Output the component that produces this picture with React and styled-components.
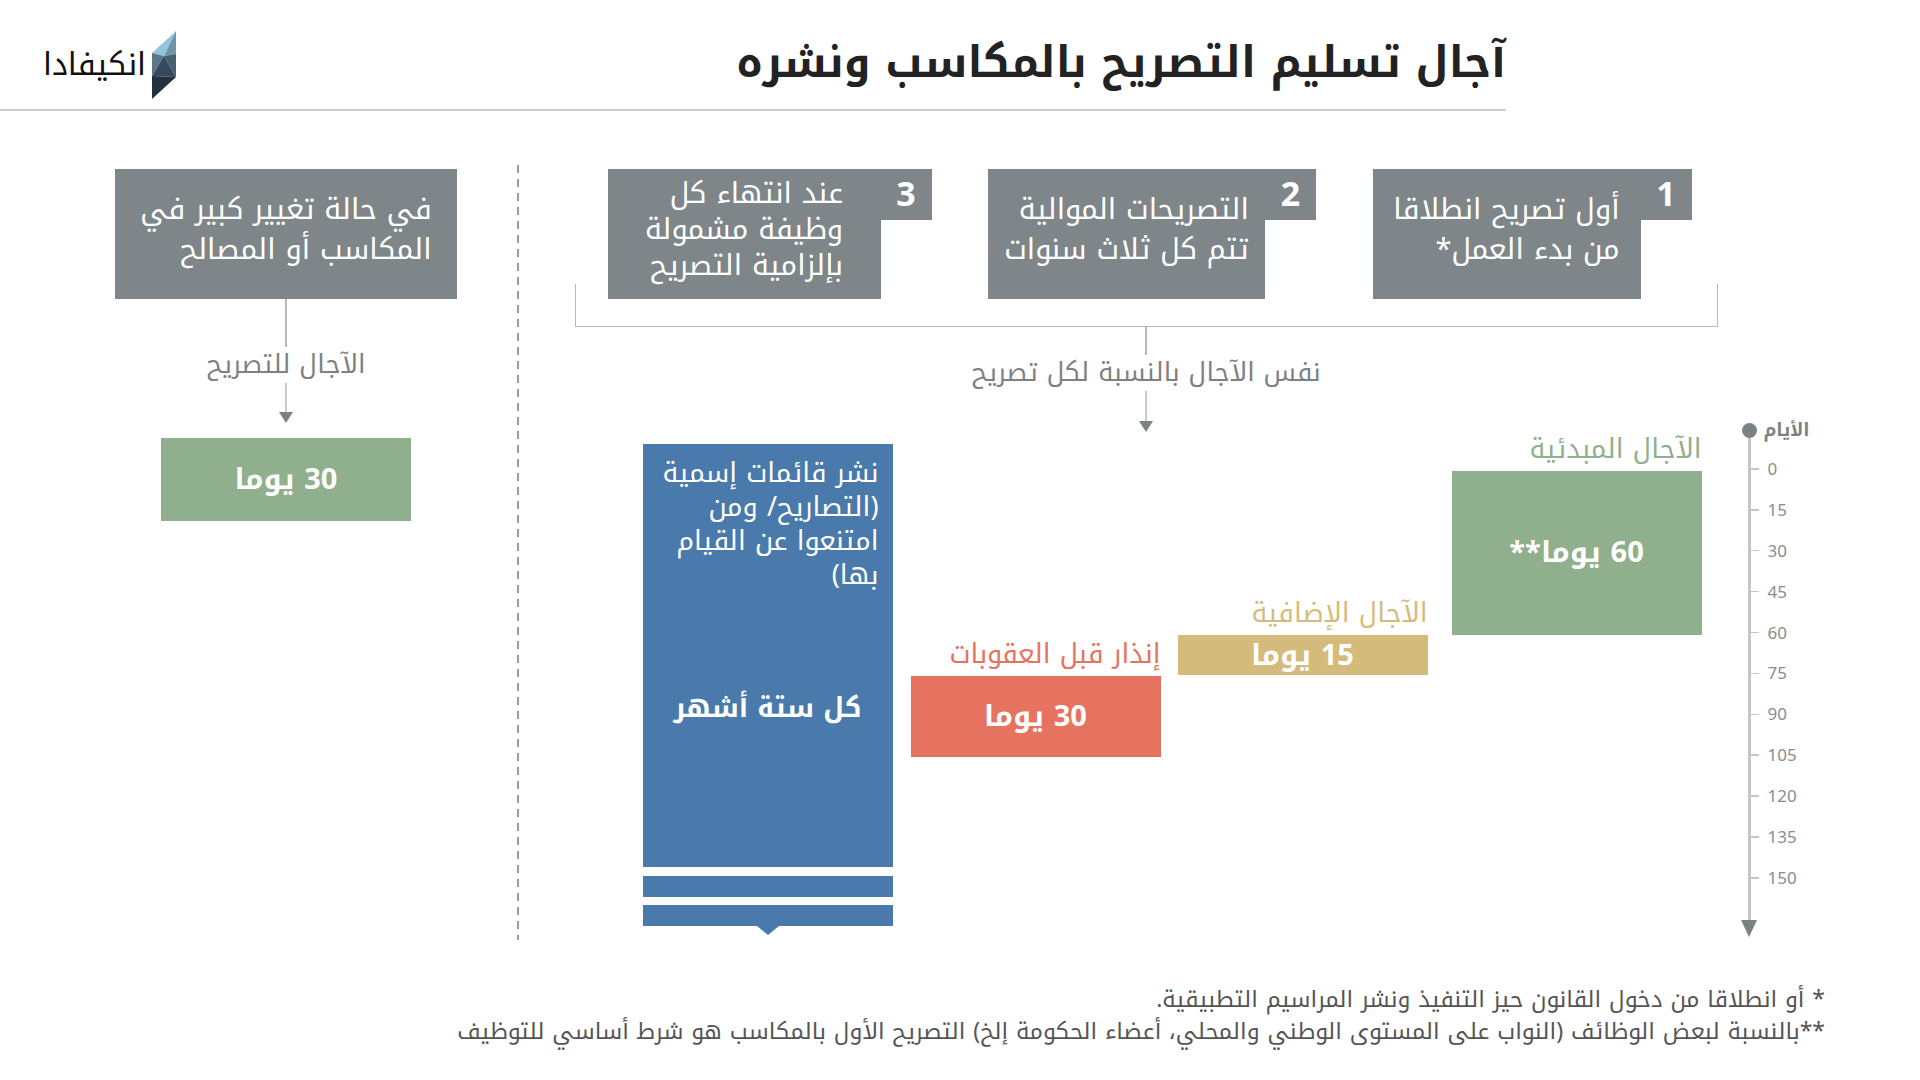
import React from 'react';
import styled, { createGlobalStyle } from 'styled-components';

const FONT = '"Noto Kufi Arabic", "Noto Sans Arabic", "DejaVu Sans", sans-serif';
const BOX_GRAY = '#7e8689';
const ARROW_GRAY = '#7b8285';
const LINE_GRAY = '#b9b9b9';

// chart scale: 15 days = 40.9px
const SCALE = 40.9 / 15;
const ZERO = 51;
const LABEL_H = 40;

const steps = [
  { num: 3, w: 273, lh: 36, lines: ['عند انتهاء كل', 'وظيفة مشمولة', 'بإلزامية التصريح'] },
  { num: 2, w: 277, lh: 40, lines: ['التصريحات الموالية', 'تتم كل ثلاث سنوات'] },
  { num: 1, w: 268, lh: 40, lines: ['أول تصريح انطلاقا', 'من بدء العمل*'] },
];

const bars = [
  { start: 75, days: 30, gap: 18, color: '#e6735f', label: 'إنذار قبل العقوبات', text: '30 يوما' },
  { start: 60, days: 15, gap: 17, color: '#d4bb7b', label: 'الآجال الإضافية', text: '15 يوما' },
  { start: 0, days: 60, gap: 24, color: '#8faf8d', label: 'الآجال المبدئية', text: '60 يوما**' },
];

const ticks = [0, 15, 30, 45, 60, 75, 90, 105, 120, 135, 150];

const blueLines = ['نشر قائمات إسمية', '(التصاريح/ ومن', 'امتنعوا عن القيام', 'بها)'];

const GlobalStyle = createGlobalStyle`
  body {
    margin: 0;
    background: #fff;
    font-family: ${FONT};
  }
`;

const Page = styled.div`
  width: 1920px;
  height: 1080px;
  overflow: hidden;
  background: #fff;
`;

const Header = styled.header`
  width: 1506px;
  height: 111px;
  box-sizing: border-box;
  padding: 16px 0 0 43px;
  border-bottom: 2px solid #cdcdcd;
  display: flex;
  align-items: center;
  justify-content: space-between;
`;

const Logo = styled.div`
  padding-top: 4px;
  display: flex;
  align-items: center;
  gap: 6px;
`;

const LogoText = styled.span`
  direction: rtl;
  font-size: 31px;
  color: #111;
`;

const Title = styled.h1`
  margin: 0;
  direction: rtl;
  font-size: 43px;
  font-weight: 700;
  color: #222;
`;

const Main = styled.main`
  display: flex;
  align-items: flex-start;
  padding-top: 58px;
`;

const LeftColumn = styled.section`
  width: 342px;
  margin-left: 115px;
  display: flex;
  flex-direction: column;
  align-items: center;
`;

const GrayBox = styled.div`
  width: ${(p) => p.$w}px;
  height: 130px;
  box-sizing: border-box;
  padding-bottom: 9px;
  background: ${BOX_GRAY};
  display: flex;
  align-items: center;
  justify-content: center;
`;

const BoxText = styled.div`
  direction: rtl;
  text-align: right;
  color: #fff;
  font-size: 29px;
  line-height: ${(p) => p.$lh}px;
`;

const Stem = styled.div`
  width: 1.5px;
  height: ${(p) => p.$h}px;
  background: ${LINE_GRAY};
`;

const Caption = styled.div`
  direction: rtl;
  font-size: 26px;
  line-height: 36px;
  color: #7d8184;
`;

const ValueBox = styled.div`
  width: 250px;
  height: ${(p) => p.$h}px;
  background: ${(p) => p.$color};
  color: #fff;
  font-weight: 700;
  font-size: 29px;
  direction: rtl;
  display: flex;
  align-items: center;
  justify-content: center;
`;

const Spacer = styled.div`
  height: ${(p) => p.$h}px;
`;

const Divider = styled.div`
  width: 1.5px;
  height: 775px;
  margin: -4px 0 0 60px;
  background: repeating-linear-gradient(to bottom, #9c9c9c 0 8px, transparent 8px 14px);
`;

const RightArea = styled.section`
  margin-left: 56px;
  display: flex;
  flex-direction: column;
`;

const Steps = styled.div`
  position: relative;
  width: 1143px;
  box-sizing: border-box;
  padding: 0 26px 28px 33px;
  display: flex;
  justify-content: space-between;

  &::after {
    content: '';
    position: absolute;
    left: 0;
    right: 0;
    bottom: 0;
    height: 43px;
    box-sizing: border-box;
    border: 1.5px solid ${LINE_GRAY};
    border-top: none;
  }
`;

const StepCard = styled.div`
  display: flex;
  align-items: flex-start;
`;

const StepNum = styled.div`
  width: 51px;
  height: 51px;
  background: ${BOX_GRAY};
  color: #fff;
  font-weight: 700;
  font-size: 34px;
  display: flex;
  align-items: center;
  justify-content: center;
`;

const Connector = styled.div`
  width: 1143px;
  display: flex;
  flex-direction: column;
  align-items: center;
`;

const Chart = styled.div`
  margin-top: -12px;
  padding-left: 68px;
  display: flex;
  align-items: flex-start;
`;

const BlueColumn = styled.div`
  width: 250px;
  margin-top: 24px;
  display: flex;
  flex-direction: column;
  align-items: center;
`;

const BlueBar = styled.div`
  width: 250px;
  height: 423px;
  box-sizing: border-box;
  padding: 12px 14px 0;
  background: #4a7aab;
  color: #fff;
  direction: rtl;
`;

const BlueLine = styled.div`
  height: 34px;
  font-size: 27px;
  line-height: 34px;
  text-align: right;
`;

const BluePeriod = styled.div`
  margin-top: 96px;
  font-size: 27px;
  line-height: 40px;
  font-weight: 700;
  text-align: center;
`;

const Stripe = styled.div`
  width: 250px;
  height: 21px;
  margin-top: ${(p) => p.$gap}px;
  background: #4a7aab;
`;

const BarColumn = styled.div`
  width: 250px;
  margin-left: ${(p) => p.$gap}px;
  display: flex;
  flex-direction: column;
`;

const BarLabel = styled.div`
  height: ${LABEL_H}px;
  direction: rtl;
  text-align: right;
  font-size: 27px;
  line-height: 36px;
  color: ${(p) => p.$color};
`;

const Axis = styled.div`
  margin: 2.5px 0 0 40px;
  display: flex;
  flex-direction: column;
`;

const AxisHead = styled.div`
  height: 15px;
  display: flex;
  align-items: center;
  gap: 7px;
`;

const Dot = styled.span`
  width: 15px;
  height: 15px;
  border-radius: 50%;
  background: ${ARROW_GRAY};
`;

const AxisTitle = styled.span`
  direction: rtl;
  font-size: 18px;
  line-height: 15px;
  font-weight: 700;
  color: ${ARROW_GRAY};
`;

const AxisTrack = styled.div`
  margin-left: 6px;
  padding: 11px 0 22px;
  border-left: 3px solid #c6c6c6;
  display: flex;
  flex-direction: column;
`;

const Tick = styled.div`
  height: 40.9px;
  display: flex;
  align-items: center;
  gap: 9px;
  font-size: 17px;
  color: #8a8d90;

  &::before {
    content: '';
    width: 8px;
    height: 1.5px;
    background: #c6c6c6;
  }
`;

const Footnotes = styled.footer`
  margin-top: 44px;
  padding-right: 95px;
  direction: rtl;
  text-align: right;
  font-size: 23px;
  line-height: 32px;
  color: #555;
`;

const LogoMark = () => (
  <svg width="26" height="68" viewBox="0 0 26 68">
    <polygon points="24,0 0,22 12,25" fill="#92c4de" />
    <polygon points="24,0 12,25 24,23" fill="#6f95ab" />
    <polygon points="0,22 12,25 0,45" fill="#5a7688" />
    <polygon points="12,25 24,23 24,46" fill="#46606f" />
    <polygon points="0,45 12,25 24,46" fill="#34495a" />
    <polygon points="0,45 24,46 0,68" fill="#22313d" />
  </svg>
);

const DownArrow = ({ shaft = 30 }) => (
  <svg width="16" height={shaft + 11} viewBox={`0 0 16 ${shaft + 11}`}>
    <line x1="8" y1="0" x2="8" y2={shaft} stroke={LINE_GRAY} strokeWidth="1.5" />
    <polygon points={`1,${shaft} 15,${shaft} 8,${shaft + 11}`} fill={ARROW_GRAY} />
  </svg>
);

const StepItem = ({ step }) => (
  <StepCard>
    <GrayBox $w={step.w}>
      <BoxText $lh={step.lh}>
        {step.lines.map((line) => (
          <div key={line}>{line}</div>
        ))}
      </BoxText>
    </GrayBox>
    <StepNum>{step.num}</StepNum>
  </StepCard>
);

const App = () => {
  return (
    <Page>
      <GlobalStyle />
      <Header>
        <Logo>
          <LogoText>انكيفادا</LogoText>
          <LogoMark />
        </Logo>
        <Title>آجال تسليم التصريح بالمكاسب ونشره</Title>
      </Header>

      <Main>
        <LeftColumn>
          <GrayBox $w={342}>
            <BoxText $lh={40}>
              <div>في حالة تغيير كبير في</div>
              <div>المكاسب أو المصالح</div>
            </BoxText>
          </GrayBox>
          <Stem $h={48} />
          <Caption>الآجال للتصريح</Caption>
          <DownArrow shaft={29} />
          <Spacer $h={15} />
          <ValueBox $h={83} $color="#8faf8d">30 يوما</ValueBox>
        </LeftColumn>

        <Divider />

        <RightArea>
          <Steps>
            {steps.map((s) => (
              <StepItem key={s.num} step={s} />
            ))}
          </Steps>
          <Connector>
            <Stem $h={28} />
            <Caption>نفس الآجال بالنسبة لكل تصريح</Caption>
            <DownArrow shaft={30} />
          </Connector>

          <Chart>
            <BlueColumn>
              <BlueBar>
                {blueLines.map((line) => (
                  <BlueLine key={line}>{line}</BlueLine>
                ))}
                <BluePeriod>كل ستة أشهر</BluePeriod>
              </BlueBar>
              <Stripe $gap={9} />
              <Stripe $gap={8} />
              <svg width="22" height="9" viewBox="0 0 22 9">
                <polygon points="0,0 22,0 11,9" fill="#4a7aab" />
              </svg>
            </BlueColumn>

            {bars.map((b) => (
              <BarColumn
                key={b.label}
                $gap={b.gap}
                style={{ marginTop: ZERO + b.start * SCALE - LABEL_H }}
              >
                <BarLabel $color={b.color}>{b.label}</BarLabel>
                <ValueBox $h={b.days * SCALE} $color={b.color}>
                  {b.text}
                </ValueBox>
              </BarColumn>
            ))}

            <Axis>
              <AxisHead>
                <Dot />
                <AxisTitle>الأيام</AxisTitle>
              </AxisHead>
              <AxisTrack>
                {ticks.map((t) => (
                  <Tick key={t}>{t}</Tick>
                ))}
              </AxisTrack>
              <svg width="16" height="17" viewBox="0 0 16 17" style={{ marginLeft: -0.5 }}>
                <polygon points="0,0 16,0 8,17" fill={ARROW_GRAY} />
              </svg>
            </Axis>
          </Chart>
        </RightArea>
      </Main>

      <Footnotes>
        <div>* أو انطلاقا من دخول القانون حيز التنفيذ ونشر المراسيم التطبيقية.</div>
        <div>**بالنسبة لبعض الوظائف (النواب على المستوى الوطني والمحلي، أعضاء الحكومة إلخ) التصريح الأول بالمكاسب هو شرط أساسي للتوظيف</div>
      </Footnotes>
    </Page>
  );
};

export default App;
